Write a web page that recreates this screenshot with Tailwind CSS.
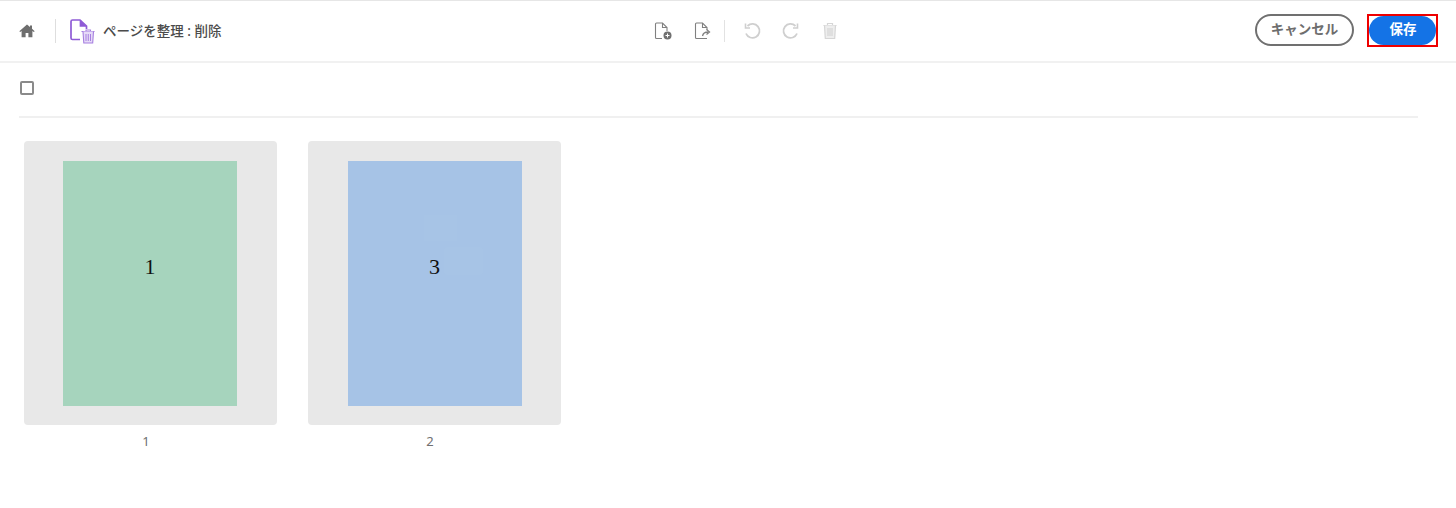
<!DOCTYPE html>
<html lang="ja">
<head>
    <meta charset="UTF-8">
    <title>ページを整理</title>
    <script src="https://cdn.jsdelivr.net/npm/@tailwindcss/browser@4"></script>
</head>
<body class="bg-white h-[508px] overflow-hidden font-['Noto_Sans','Noto_Sans_CJK_JP',sans-serif]">
    <!-- toolbar -->
    <header class="h-[63px] border-t border-b-2 border-t-[#e6e6e6] border-b-[#f1f1f1] flex items-center relative">
        <div class="flex items-center pl-[19px]">
            <svg class="w-4 h-4 text-[#6e6e6e]" viewBox="0 0 16 16" fill="currentColor"><path d="M8 1.500 0.300 8.200 1.200 9 2.600 8v6.200h4V10h2.800v4.200h4V8l1.400 1 .9-.8L13 5.800V2.500h-2v1.600z"/></svg>
            <div class="w-px h-6 bg-[#dedede] ml-[20px] mr-[14px]"></div>
            <svg class="w-[25px] h-[25px]" viewBox="0 0 25 25" fill="none" stroke="#8f5bd6" stroke-width="1.700">
                <path d="M10 20.500H2.500a1.500 1.500 0 0 1-1.500-1.500V2.500a1.500 1.500 0 0 1 1.500-1.500h7.500L16.500 7v3"/>
                <path d="M10.500 1.500v5.500h5.500" fill="#8f5bd6"/>
                <path d="M11.500 12.500h13M16 12.500v-1.500h4.500v1.500" stroke-width="1.100" stroke="#a67fe0"/>
                <path d="M13 12.500l.8 11.500h8.900l.8-11.500" fill="#e6dbf7" stroke-width="1.100" stroke="#a67fe0"/>
                <path d="M16 15v7M18.250 15v7M20.500 15v7" stroke-width="1" stroke="#a67fe0"/>
            </svg>
            <span class="ml-[8px] text-[13.500px] font-medium text-[#4b4b4b]">ページを整理 : 削除</span>
        </div>
        <div class="absolute left-[653px] top-0 h-full flex items-center">
            <svg class="w-[20px] h-[20px]" viewBox="0 0 20 20" fill="none" stroke="#808080" stroke-width="1.100">
                <path d="M9 17.500H3.500a1 1 0 0 1-1-1V3a1 1 0 0 1 1-1h6l4.500 4.500V10"/><path d="M9.500 2v4.500H14"/>
                <circle cx="14.500" cy="14.500" r="4" fill="#707070" stroke="none"/><path d="M14.500 12.500v4M12.500 14.500h4" stroke="#fff" stroke-width="1"/>
            </svg>
            <svg class="w-[20px] h-[20px] ml-[20px]" viewBox="0 0 20 20" fill="none" stroke="#808080" stroke-width="1.100">
                <path d="M14 17.500H3.500a1 1 0 0 1-1-1V3a1 1 0 0 1 1-1h6l4.500 4.500V9"/><path d="M9.500 2v4.500H14"/>
                <path d="M9.500 15c.5-2.500 2.500-4 5.500-4M13.500 8.500 16.500 11l-3 2.500" stroke-width="1.300"/>
            </svg>
            <div class="w-px h-[22px] bg-[#e2e2e2] ml-[11px] mr-[18px]"></div>
            <svg class="w-[18px] h-[18px]" viewBox="0 0 18 18" fill="none" stroke="#cfcfcf" stroke-width="1.800">
                <path d="M4.500 4A7 7 0 1 1 3 11.500"/><path d="M2.500 1.500V6H7" stroke-width="1.600"/>
            </svg>
            <svg class="w-[18px] h-[18px] ml-[21px]" viewBox="0 0 18 18" fill="none" stroke="#cfcfcf" stroke-width="1.800">
                <path d="M13.500 4A7 7 0 1 0 15 11.500"/><path d="M15.500 1.500V6H11" stroke-width="1.600"/>
            </svg>
            <svg class="w-[18px] h-[18px] ml-[21px]" viewBox="0 0 18 18" fill="none" stroke="#d6d6d6" stroke-width="1.200">
                <path d="M2.500 3.500h13M6.500 3.500V1.500h5v2"/><path d="M3.500 3.500l.8 13h9.400l.8-13" fill="#eeeeee"/><path d="M7 6v8M9 6v8M11 6v8"/>
            </svg>
        </div>
        <div class="ml-auto flex items-center mr-[18px] mt-[-2px]">
            <button class="w-[99px] h-[32px] rounded-full border-2 border-[#707070] text-[13.500px] font-semibold text-[#6e6e6e] flex items-center justify-center pb-px">キャンセル</button>
            <div class="ml-[13px] border-2 border-[#ee0000] w-[71px] h-[33px]">
                <button class="w-full h-full rounded-full bg-[#1473e6] text-white text-[13.500px] font-bold flex items-center justify-center pb-px pl-px">保存</button>
            </div>
        </div>
    </header>

    <main class="px-[19px] w-[1418px] box-content">
        <div class="h-[55px] border-b-2 border-[#f0f0f0] w-[1399px] flex items-center">
            <div class="w-[14px] h-[14px] mt-[-3px] ml-px border-2 border-[#8a8a8a] rounded-[2px]"></div>
        </div>

        <div class="flex gap-[31px] pl-[4.500px] pt-[23px]">
            <div class="w-[253px]">
                <div class="h-[284px] bg-[#e8e8e8] rounded-[4px] flex items-center justify-center">
                    <div class="w-[174px] h-[245px] bg-[#a6d4bd] flex items-center justify-center pb-[33px] font-['Liberation_Serif',serif] text-[22px] text-[#111]">1</div>
                </div>
                <p class="mt-[7px] pr-[8px] text-center text-[13px] text-[#707070]">1</p>
            </div>
            <div class="w-[253px] ml-[0.500px]">
                <div class="h-[284px] bg-[#e8e8e8] rounded-[4px] flex items-center justify-center">
                    <div class="relative w-[174px] h-[245px] bg-[#a6c3e6] flex items-center justify-center pb-[33px] font-['Liberation_Serif',serif] text-[22px] text-[#111]">
                        <div class="absolute left-[76px] top-[54px] w-[33px] h-[26px] bg-[#a7c4e6]"></div>
                        <div class="absolute left-[96px] top-[86px] w-[39px] h-[28px] bg-[#a7c4e6] rounded-[3px]"></div>
                        <span class="relative">3</span>
                    </div>
                </div>
                <p class="mt-[7px] pr-[9px] text-center text-[13px] text-[#707070]">2</p>
            </div>
        </div>
    </main>
</body>
</html>
